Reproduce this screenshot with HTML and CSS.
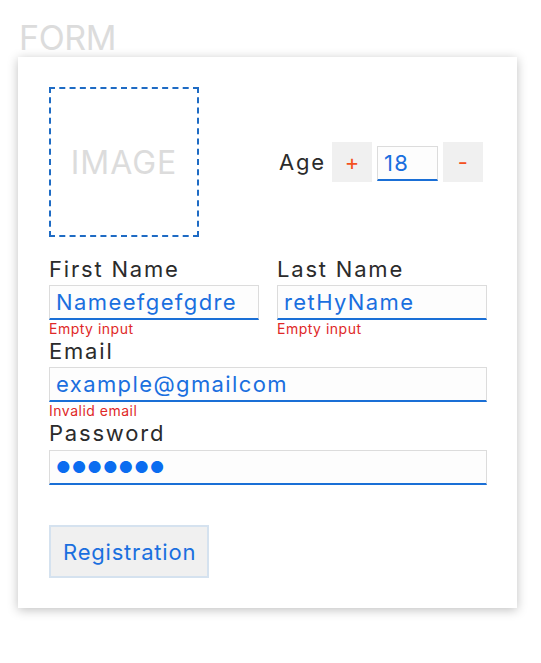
FILE: index.html
```html
<!DOCTYPE html>
<html>
<head>
<meta charset="utf-8">
<link rel="stylesheet" href="styles.css">
</head>
<body>
<h1 class="title">FORM</h1>
<div class="card">
  <div class="row top">
    <div class="image"><span>IMAGE</span></div>
    <div class="age">
      <span class="age-label">Age</span>
      <button class="step">+</button>
      <div class="field small"><span class="value">18</span></div>
      <button class="step">-</button>
    </div>
  </div>
  <div class="row">
    <div class="group">
      <div class="label">First Name</div>
      <div class="field"><span class="value">Nameefgefgdre</span></div>
      <div class="error">Empty input</div>
    </div>
    <div class="group">
      <div class="label">Last Name</div>
      <div class="field"><span class="value">retHyName</span></div>
      <div class="error">Empty input</div>
    </div>
  </div>
  <div class="group">
    <div class="label">Email</div>
    <div class="field"><span class="value">example@gmailcom</span></div>
    <div class="error">Invalid email</div>
  </div>
  <div class="group password">
    <div class="label">Password</div>
    <div class="field"><span class="value dots">●●●●●●●</span></div>
  </div>
  <button class="submit">Registration</button>
</div>
</body>
</html>
```
FILE: styles.css
```css
html, body { margin: 0; padding: 0; background: #fff; }
body {
  padding: 18px;
  font-family: "Inter", "Noto Sans", sans-serif;
  color: #2b2b2b;
}
.title {
  margin: 0 0 0 1px;
  font-size: 34px;
  font-weight: 400;
  line-height: 39px;
  color: #dcdcdc;
  letter-spacing: -0.4px;
}
.card {
  width: 438px;
  padding: 30px 30px 30px 31px;
  box-shadow: 0 2px 10px rgba(0,0,0,0.25);
  display: flex;
  flex-direction: column;
}
.row {
  display: grid;
  grid-template-columns: 210px 210px;
  column-gap: 18px;
}
.row.top { margin-bottom: 19px; }
.image {
  width: 146px;
  height: 146px;
  border: 2px dashed #1e6bc4;
  display: flex;
  align-items: center;
  justify-content: center;
  font-size: 32px;
  color: #dcdcdc;
  letter-spacing: 1px;
}
.age {
  display: flex;
  align-items: center;
  gap: 5px;
  padding-left: 2px;
}
.age-label { font-size: 22px; margin-right: 1px; letter-spacing: 1.8px; }
.step {
  width: 40px;
  height: 40px;
  border: none;
  background: #f0f0f0;
  color: #f4511e;
  font-family: inherit;
  font-size: 22px;
  padding: 0;
}
.label {
  font-size: 22px;
  line-height: 27px;
  letter-spacing: 1.8px;
}
.field {
  height: 32px;
  border: 1px solid #dcdcdc;
  border-bottom: 2px solid #1a6fd6;
  background: #fdfdfd;
  display: flex;
  align-items: center;
  padding: 0 6px;
  margin-top: 2px;
}
.field.small { width: 47px; }
.value {
  font-size: 22px;
  color: #1a6fdf;
  letter-spacing: 1.4px;
}
.dots { font-size: 16px; letter-spacing: 1px; color: #0a6cf0; }
.error {
  font-size: 14px;
  line-height: 18px;
  color: #e02828;
  letter-spacing: 0.5px;
}
.password .field { margin-top: 3px; }
.submit {
  align-self: flex-start;
  margin-top: 40px;
  height: 53px;
  padding: 0 11px 0 12px;
  background: #f0f0f0;
  border: 2px solid #d5e2ef;
  color: #1a6fdf;
  font-family: inherit;
  font-size: 22px;
  letter-spacing: 0.8px;
}
```
